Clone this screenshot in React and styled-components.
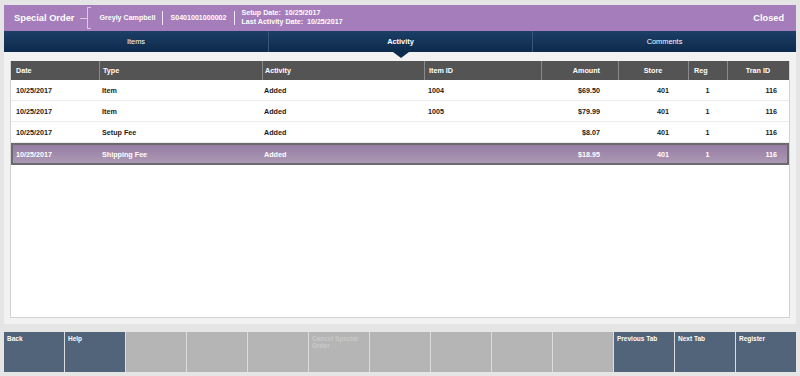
import React from "react";
import styled, { createGlobalStyle, css } from "styled-components";

const Global = createGlobalStyle`
  html, body { margin: 0; padding: 0; background: #e5e5e5; }
  body { font-family: "Liberation Sans", Arial, sans-serif; }
  * { box-sizing: border-box; }
`;

const Screen = styled.div`
  width: 800px;
  height: 376px;
  padding: 5px 4px 0 4px;
  background: #e5e5e5;
  display: flex;
  flex-direction: column;
  overflow: hidden;
`;

const Header = styled.div`
  height: 26px;
  background: #a47dba;
  display: flex;
  align-items: center;
  padding: 0 12px 0 10px;
  color: #fff;
  font-weight: bold;
`;

const Title = styled.div`
  font-size: 9.3px;
  margin-right: 6px;
`;

const Bracket = styled.div`
  position: relative;
  width: 4px;
  height: 22px;
  margin-left: 7px;
  margin-right: 8px;
  border: 1px solid #d9c9e2;
  border-right: none;
  &::before {
    content: "";
    position: absolute;
    left: -8px;
    top: 10px;
    width: 7px;
    height: 1px;
    background: #d9c9e2;
  }
`;

const Field = styled.div`
  font-size: 7.1px;
  line-height: 9px;
`;

const Divider = styled.div`
  width: 1px;
  height: 14px;
  background: #f0e8f4;
  margin: 0 7px;
`;

const Status = styled.div`
  margin-left: auto;
  font-size: 9.2px;
`;

const TabBar = styled.div`
  height: 21px;
  display: grid;
  grid-template-columns: 1fr 1fr 1fr;
  background: linear-gradient(#1d3f66, #0c2a4c);
`;

const Tab = styled.div`
  position: relative;
  display: flex;
  align-items: center;
  justify-content: center;
  color: #fff;
  font-size: 7.4px;
  border-left: 1px solid #3a5677;
  &:first-child { border-left: none; }
  ${(p) =>
    p.$active &&
    css`
      font-weight: bold;
      &::after {
        content: "";
        position: absolute;
        left: 50%;
        bottom: -6px;
        margin-left: -8px;
        border-left: 8px solid transparent;
        border-right: 8px solid transparent;
        border-top: 6px solid #0c2a4c;
        z-index: 2;
      }
    `}
`;

const Panel = styled.div`
  height: 272px;
  background: #f2f2f2;
  padding: 9px 6px 6px 6px;
`;

const TableBox = styled.div`
  height: 100%;
  background: #fff;
  border: 1px solid #d2d2d2;
  border-top: none;
`;

const cols = "88px 163px 162px 117px 77px 70px 39px 1fr";

const HeadRow = styled.div`
  display: grid;
  grid-template-columns: ${cols};
  height: 19px;
  background: #545454;
  color: #fff;
  font-size: 7.2px;
  font-weight: bold;
`;

const HeadCell = styled.div`
  display: flex;
  align-items: center;
  padding: ${(p) => p.$pad || "0 6px 0 5px"};
  border-left: 1px solid #8a8a8a;
  justify-content: ${(p) =>
    p.$align === "right" ? "flex-end" : p.$align === "center" ? "center" : "flex-start"};
  &:first-child { border-left: none; }
`;

const Row = styled.div`
  display: grid;
  grid-template-columns: ${cols};
  height: 21px;
  font-size: 7.2px;
  font-weight: bold;
  color: #1a1a1a;
  border-bottom: 1px solid #ececec;
  ${(p) =>
    p.$selected &&
    css`
      height: 22px;
      color: #fff;
      background: linear-gradient(#957aa2, #ad9bb5);
      border-bottom: none;
      box-shadow: inset 0 0 0 2px #6b6b6b;
    `}
`;

const Cell = styled.div`
  display: flex;
  align-items: center;
  padding: ${(p) => p.$pad || "0 6px 0 5px"};
  justify-content: ${(p) =>
    p.$align === "right" ? "flex-end" : p.$align === "center" ? "center" : "flex-start"};
`;

const Footer = styled.div`
  margin-top: 8px;
  height: 40px;
  display: grid;
  grid-template-columns: repeat(13, 1fr);
  gap: 1px;
  background: #dcdcdc;
`;

const FButton = styled.div`
  background: ${(p) => (p.$on ? "#51647a" : "#b5b5b5")};
  color: ${(p) => (p.$on ? "#fff" : "#c9c9c9")};
  font-size: 6.5px;
  font-weight: bold;
  line-height: 7px;
  padding: 3px 3px;
`;

const columns = [
  { label: "Date", align: "left" },
  { label: "Type", align: "left", pad: "0 4px 0 3px" },
  { label: "Activity", align: "left", pad: "0 4px 0 2px" },
  { label: "Item ID", align: "left", pad: "0 4px 0 4px" },
  { label: "Amount", align: "right", pad: "0 18px 0 5px" },
  { label: "Store", align: "center" },
  { label: "Reg", align: "left" },
  { label: "Tran ID", align: "center" },
];

const rows = [
  ["10/25/2017", "Item", "Added", "1004", "$69.50", "401", "1", "116"],
  ["10/25/2017", "Item", "Added", "1005", "$79.99", "401", "1", "116"],
  ["10/25/2017", "Setup Fee", "Added", "", "$8.07", "401", "1", "116"],
  ["10/25/2017", "Shipping Fee", "Added", "", "$18.95", "401", "1", "116"],
];

const cellSpec = [
  { align: "left" },
  { align: "left", pad: "0 4px 0 3px" },
  { align: "left", pad: "0 4px 0 2px" },
  { align: "left", pad: "0 4px 0 4px" },
  { align: "right", pad: "0 18px 0 4px" },
  { align: "right", pad: "0 19px 0 4px" },
  { align: "center", pad: "0" },
  { align: "right", pad: "0 12px 0 4px" },
];

const buttons = [
  { t: "Back", on: true },
  { t: "Help", on: true },
  { t: "" },
  { t: "" },
  { t: "" },
  { t: "Cancel Special Order" },
  { t: "" },
  { t: "" },
  { t: "" },
  { t: "" },
  { t: "Previous Tab", on: true },
  { t: "Next Tab", on: true },
  { t: "Register", on: true },
];

export default function App() {
  return (
    <>
      <Global />
      <Screen>
        <Header>
          <Title>Special Order</Title>
          <Bracket />
          <Field>Greyly Campbell</Field>
          <Divider />
          <Field>S0401001000002</Field>
          <Divider />
          <Field>
            Setup Date:&nbsp; 10/25/2017
            <br />
            Last Activity Date:&nbsp; 10/25/2017
          </Field>
          <Status>Closed</Status>
        </Header>
        <TabBar>
          <Tab>Items</Tab>
          <Tab $active>Activity</Tab>
          <Tab>Comments</Tab>
        </TabBar>
        <Panel>
          <TableBox>
            <HeadRow>
              {columns.map((c) => (
                <HeadCell key={c.label} $align={c.align} $pad={c.pad}>
                  {c.label}
                </HeadCell>
              ))}
            </HeadRow>
            {rows.map((r, i) => (
              <Row key={i} $selected={i === 3}>
                {r.map((v, j) => (
                  <Cell key={j} $align={cellSpec[j].align} $pad={cellSpec[j].pad}>
                    {v}
                  </Cell>
                ))}
              </Row>
            ))}
          </TableBox>
        </Panel>
        <Footer>
          {buttons.map((b, i) => (
            <FButton key={i} $on={b.on}>
              {b.t}
            </FButton>
          ))}
        </Footer>
      </Screen>
    </>
  );
}
